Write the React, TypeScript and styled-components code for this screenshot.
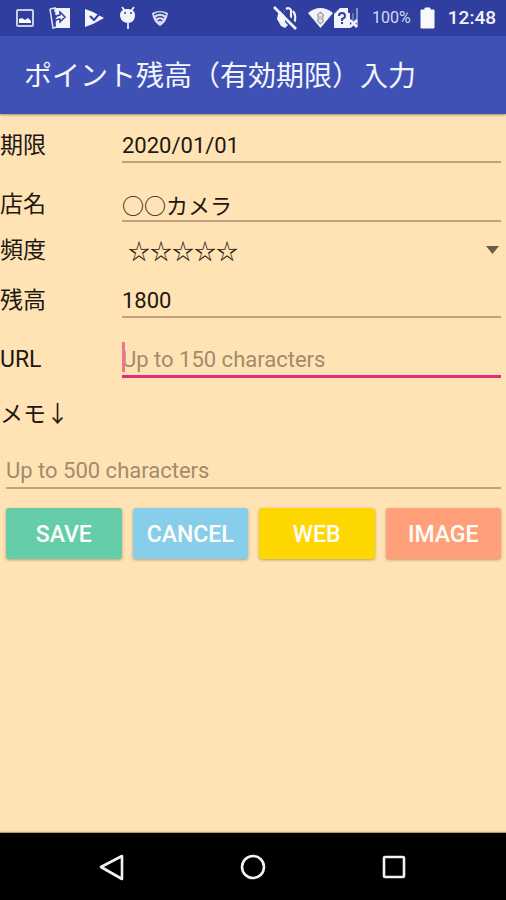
import React from "react";
import styled, { createGlobalStyle, css } from "styled-components";

const GlobalStyle = createGlobalStyle`
  *, *::before, *::after { box-sizing: border-box; }
  body {
    margin: 0;
    background: #ffe3b4;
    font-family: Roboto, "Noto Sans CJK JP", sans-serif;
    color: #1d1813;
  }
  button, input, select, textarea { font: inherit; color: inherit; }
`;

const Screen = styled.div`
  display: flex;
  flex-direction: column;
  min-height: 100vh;
`;

const StatusBar = styled.header`
  display: flex;
  align-items: center;
  justify-content: space-between;
  height: 36px;
  padding: 0 10px 0 15px;
  background: #303f9f;
  color: #f3f4fb;
`;

const StatusGroup = styled.div<{ $gap: number }>`
  display: flex;
  align-items: center;
  gap: ${(p) => p.$gap}px;
`;

const Signals = styled.div`
  display: flex;
  align-items: center;
  gap: 1px;
`;

const BatteryText = styled.span`
  font-size: 16px;
  line-height: 20px;
  margin-left: 4px;
  color: #d5d8ee;
`;

const Clock = styled.time`
  font-size: 19px;
  line-height: 24px;
  font-weight: 500;
  margin-left: 4px;
`;

const Toolbar = styled.div`
  position: relative;
  display: flex;
  align-items: center;
  height: 78px;
  padding: 4px 24px 0;
  background: #3f51b5;
  box-shadow: 0 1px 2px rgba(60, 40, 20, 0.45);
`;

const Title = styled.h1`
  margin: 0;
  font-size: 28px;
  line-height: 40px;
  font-weight: 400;
  color: #f4f5fc;
`;

const Form = styled.form`
  flex: 1;
  font-size: 23px;
`;

const Row = styled.div<{ $compact?: boolean }>`
  display: grid;
  grid-template-columns: 122px 1fr;
  align-items: start;
  height: ${(p) => (p.$compact ? 37 : 59)}px;
  padding: ${(p) => (p.$compact ? "2px 5px 0 0" : "15px 5px 0 0")};
`;

const Label = styled.label`
  line-height: 34px;
`;

const MemoLabel = styled(Label)`
  display: block;
  padding: 11px 0 8px;
`;

const MemoRow = styled.div`
  display: flex;
  height: 59px;
  padding: 15px 5px 0 6px;
`;

const fieldStyle = css`
  display: block;
  width: 100%;
  height: 34px;
  margin: 0;
  padding: 0;
  border: 0;
  border-bottom: 2px solid #bfa27c;
  border-radius: 0;
  outline: 0;
  background: transparent;
  font-size: 22px;
  &::placeholder { color: #a18c6d; opacity: 1; }
`;

const Field = styled.input<{ $active?: boolean }>`
  ${fieldStyle}
  ${(p) =>
    p.$active &&
    css`
      height: 35px;
      border-bottom: 3px solid #e32b77;
      caret-color: transparent;
    `}
`;

const MemoField = styled.textarea`
  ${fieldStyle}
  line-height: 32px;
  resize: none;
  overflow: hidden;
`;

const FieldBox = styled.div`
  position: relative;
`;

const Caret = styled.span`
  position: absolute;
  left: 0;
  top: -1px;
  width: 3px;
  height: 30px;
  background: #f5718d;
  pointer-events: none;
`;

const Select = styled.select`
  display: block;
  width: 100%;
  height: 34px;
  padding: 0 24px 0 6px;
  border: 0;
  outline: 0;
  background: transparent;
  font-size: 22px;
  appearance: none;
`;

const Arrow = styled.svg`
  position: absolute;
  right: 2px;
  top: 12px;
  pointer-events: none;
`;

const Actions = styled.div`
  display: grid;
  grid-template-columns: repeat(4, 1fr);
  gap: 11px;
  padding: 9px 5px 12px 6px;
`;

const ActionButton = styled.button<{ $color: string }>`
  height: 51px;
  padding: 2px 0 0;
  border: 0;
  border-radius: 3px;
  background: ${(p) => p.$color};
  box-shadow: 0 1px 3px rgba(80, 50, 10, 0.4);
  color: #fffdfa;
  font-size: 23px;
  font-weight: 500;
  text-align: center;
`;

const NavBar = styled.nav`
  display: grid;
  grid-template-columns: repeat(3, 141px);
  justify-content: center;
  height: 67px;
  background: #000;
  box-shadow: 0 -1px 1px rgba(60, 40, 20, 0.4);
`;

const NavButton = styled.button`
  display: flex;
  align-items: center;
  justify-content: center;
  padding: 0;
  border: 0;
  background: transparent;
  color: #f2f2f2;
`;

const PictureIcon = () => (
  <svg width="20" height="20" viewBox="0 0 20 20" aria-hidden="true">
    <rect x="2" y="2" width="16" height="16" rx="1" fill="none" stroke="#c9cde9" strokeWidth="2" />
    <path d="M4 15v-4l3-1 3 2 3-2 3 3v2z" fill="#fff" />
  </svg>
);

const TransferIcon = () => (
  <svg width="22" height="24" viewBox="0 0 22 24" aria-hidden="true">
    <path d="M6 2h15v20H7z" fill="#f3f4fb" />
    <path d="M1 3l5-1v4M1 3l3 19 4-1" fill="none" stroke="#e3e5f5" strokeWidth="1.5" />
    <path d="M6 9v7q1-3 5-3v3l5-5-5-5v3q-3 0-5 3z" fill="#f3f4fb" stroke="#303f9f" strokeWidth="1.5" />
  </svg>
);

const PlayCheckIcon = () => (
  <svg width="20" height="20" viewBox="0 0 20 20" aria-hidden="true">
    <path d="M0 1l8 3 11 6-11 6-8 3z" fill="#f3f4fb" />
    <path d="M5 8l4 4 8-9" fill="none" stroke="#303f9f" strokeWidth="2" />
  </svg>
);

const DroidIcon = () => (
  <svg width="18" height="24" viewBox="0 0 18 24" aria-hidden="true">
    <path d="M3 1l3 4M15 1l-3 4" stroke="#f3f4fb" strokeWidth="1.8" />
    <path d="M1 9c0-8 15-8 15 0 0 5-3 8-7 8s-8-3-8-8z" fill="#f3f4fb" />
    <path d="M8 16h2v7H8z" fill="#d5d8ee" />
    <circle cx="6" cy="7" r="1" fill="#303f9f" />
    <circle cx="12" cy="7" r="1" fill="#303f9f" />
  </svg>
);

const ShieldWifiIcon = () => (
  <svg width="18" height="18" viewBox="0 0 18 18" aria-hidden="true">
    <path d="M1 4q8-4 16 0-1 9-8 13-7-4-8-13z" fill="#d9dcf0" />
    <path d="M3 6q6-4 12 0M5 9q4-3 8 0M7 12q2-2 4 0" fill="none" stroke="#303f9f" strokeWidth="1.4" />
  </svg>
);

const VibrateOffIcon = () => (
  <svg width="26" height="26" viewBox="0 0 26 26" aria-hidden="true">
    <path d="M8 5l4 1v11l3 3-3 3-4-2-4-7 1-5z" fill="#f3f4fb" />
    <path d="M13 4q3-2 5 1v8M20 6q4 5 1 12" fill="none" stroke="#f3f4fb" strokeWidth="2.2" />
    <path d="M4 1l22 22" stroke="#303f9f" strokeWidth="3" />
    <path d="M1 2l22 22" stroke="#f3f4fb" strokeWidth="2.6" />
  </svg>
);

const WifiIcon = () => (
  <svg width="25" height="22" viewBox="0 0 25 22" aria-hidden="true">
    <path d="M0 6Q12.500-4 25 6L12.500 21z" fill="#f3f4fb" />
    <path d="M12.500 5l3 3-1 3 1 3-3 3-3-3 1-3-1-3z" fill="#c9c9c6" stroke="#a5a6a4" strokeWidth="1.2" />
    <path d="M11 8h3M11 14h3" stroke="#f3f4fb" strokeWidth="1.5" />
  </svg>
);

const SimIcon = () => (
  <svg width="25" height="22" viewBox="0 0 25 22" aria-hidden="true">
    <path d="M0 7l6-6h8v5h2v15H0z" fill="#f3f4fb" />
    <path d="M23 1v19" stroke="#8791cb" strokeWidth="2" />
    <path d="M19 6v8" stroke="#6672bb" strokeWidth="2" />
    <path d="M5 9q0-3 3-3t3 3q0 2-3 3v2M8 15v2" fill="none" stroke="#303f9f" strokeWidth="2" />
    <path d="M16 13l7 7M23 13l-7 7" fill="none" stroke="#f3f4fb" strokeWidth="2.500" />
  </svg>
);

const BatteryIcon = () => (
  <svg width="15" height="22" viewBox="0 0 15 22" aria-hidden="true">
    <path d="M5 1h5v2h4v18H1V3h4z" fill="#f8f9fd" stroke="#f8f9fd" strokeLinejoin="round" />
  </svg>
);

const BackIcon = () => (
  <svg width="28" height="28" viewBox="0 0 28 28" aria-hidden="true">
    <path d="M24 3v23L3 14z" fill="none" stroke="currentColor" strokeWidth="2.600" strokeLinejoin="round" />
  </svg>
);

const HomeIcon = () => (
  <svg width="28" height="28" viewBox="0 0 28 28" aria-hidden="true">
    <circle cx="14" cy="14" r="11" fill="none" stroke="currentColor" strokeWidth="2.600" />
  </svg>
);

const RecentIcon = () => (
  <svg width="28" height="28" viewBox="0 0 28 28" aria-hidden="true">
    <rect x="4" y="4" width="20" height="20" rx="1" fill="none" stroke="currentColor" strokeWidth="2.600" />
  </svg>
);

const actions = [
  { text: "SAVE", color: "#66cdaa" },
  { text: "CANCEL", color: "#87ceeb" },
  { text: "WEB", color: "#ffd700" },
  { text: "IMAGE", color: "#ffa07a" },
];

const ratings = ["☆☆☆☆☆", "★☆☆☆☆", "★★☆☆☆", "★★★☆☆", "★★★★☆", "★★★★★"];

export default function App() {
  return (
    <Screen lang="ja">
      <GlobalStyle />
      <StatusBar>
        <StatusGroup $gap={14}>
          <PictureIcon />
          <TransferIcon />
          <PlayCheckIcon />
          <DroidIcon />
          <ShieldWifiIcon />
        </StatusGroup>
        <StatusGroup $gap={9}>
          <VibrateOffIcon />
          <Signals>
            <WifiIcon />
            <SimIcon />
          </Signals>
          <BatteryText>100%</BatteryText>
          <BatteryIcon />
          <Clock>12:48</Clock>
        </StatusGroup>
      </StatusBar>
      <Toolbar>
        <Title>ポイント残高（有効期限）入力</Title>
      </Toolbar>
      <Form onSubmit={(e) => e.preventDefault()}>
        <Row>
          <Label htmlFor="limit">期限</Label>
          <Field id="limit" defaultValue="2020/01/01" />
        </Row>
        <Row>
          <Label htmlFor="shop">店名</Label>
          <Field id="shop" defaultValue="○○カメラ" />
        </Row>
        <Row $compact>
          <Label htmlFor="frequency">頻度</Label>
          <FieldBox>
            <Select id="frequency" defaultValue={ratings[0]}>
              {ratings.map((r) => (
                <option key={r}>{r}</option>
              ))}
            </Select>
            <Arrow width="13" height="8" viewBox="0 0 13 8" aria-hidden="true">
              <path d="M0 0h13L6.500 8z" fill="#6b5c49" />
            </Arrow>
          </FieldBox>
        </Row>
        <Row>
          <Label htmlFor="balance">残高</Label>
          <Field id="balance" inputMode="numeric" defaultValue="1800" />
        </Row>
        <Row>
          <Label htmlFor="url">URL</Label>
          <FieldBox>
            <Field id="url" type="url" maxLength={150} placeholder="Up to 150 characters" $active />
            <Caret />
          </FieldBox>
        </Row>
        <MemoLabel htmlFor="memo">メモ↓</MemoLabel>
        <MemoRow>
          <MemoField id="memo" rows={1} maxLength={500} placeholder="Up to 500 characters" />
        </MemoRow>
        <Actions>
          {actions.map((a) => (
            <ActionButton key={a.text} type="button" $color={a.color}>
              {a.text}
            </ActionButton>
          ))}
        </Actions>
      </Form>
      <NavBar>
        <NavButton type="button" aria-label="Back">
          <BackIcon />
        </NavButton>
        <NavButton type="button" aria-label="Home">
          <HomeIcon />
        </NavButton>
        <NavButton type="button" aria-label="Recent apps">
          <RecentIcon />
        </NavButton>
      </NavBar>
    </Screen>
  );
}
